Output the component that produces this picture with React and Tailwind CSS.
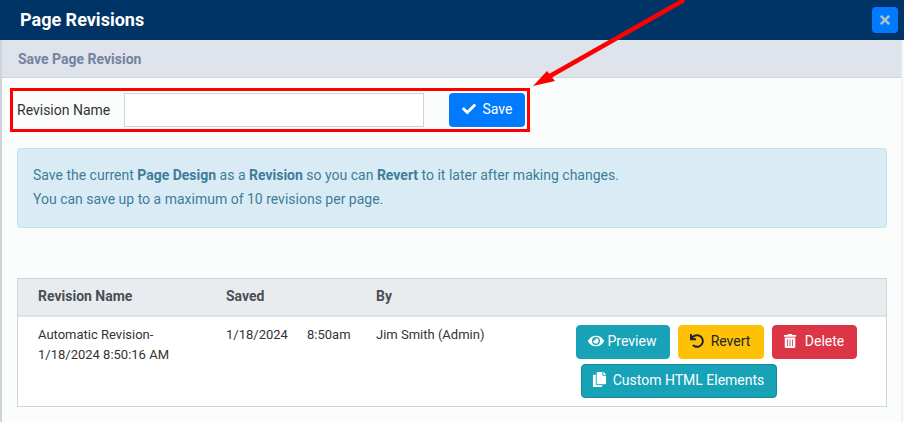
import React from 'react';
import { FaCheck, FaTimes, FaEye, FaUndo, FaTrashAlt, FaCopy } from 'react-icons/fa';

const ActionButton = ({ icon, label, className }) => (
  <button className={`flex h-[34px] items-center justify-center rounded border pr-[2px] pb-[3px] text-sm ${className}`}>
    {icon}
    <span>{label}</span>
  </button>
);

const App = () => {
  return (
    <div className="relative h-[422px] w-[904px] overflow-hidden bg-[#fbfdfd] font-['Roboto',sans-serif] text-[#333]">
      <header className="flex h-10 items-center justify-between bg-[#003366] pl-5 pr-[6px]">
        <h1 className="text-lg font-bold text-white">Page Revisions</h1>
        <button className="flex h-[26px] w-[26px] items-center justify-center rounded bg-[#007bff] text-[#b4bfcc]">
          <FaTimes className="h-[14px] w-[14px]" />
        </button>
      </header>

      <div className="mx-[2px]">
        <div className="flex h-[38px] items-center border-b border-[#ced4da] bg-[#dee3ec] pl-4 text-sm font-bold text-[#75829f]">
          Save Page Revision
        </div>

        <div className="mt-[10px] ml-2 flex h-11 w-[520px] items-center border-[3px] border-[#ff0000] pl-1">
          <label className="w-[107px] text-sm text-[#333]">Revision Name</label>
          <input className="h-[34px] w-[300px] border border-[#ced4da] bg-white outline-none" />
          <button className="ml-[25px] flex h-[34px] w-[76px] items-center justify-center gap-[7px] rounded bg-[#007bff] pb-[2px] text-sm text-white">
            <FaCheck className="h-[14px] w-[14px]" />
            Save
          </button>
        </div>

        <div className="mt-4 ml-[15px] flex h-20 w-[870px] flex-col justify-center gap-[4px] rounded border border-[#bee5eb] bg-[#d9ecf6] pb-[2px] pl-[15px] text-sm text-[#3f7c99]">
          <p>
            Save the current <b>Page Design</b> as a <b>Revision</b> so you can <b>Revert</b> to it later after making changes.
          </p>
          <p>You can save up to a maximum of 10 revisions per page.</p>
        </div>

        <div className="mt-[50px] ml-[15px] w-[870px] border border-[#ced4da] bg-white">
          <div className="flex h-[38px] items-center border-b-2 border-[#dee2e6] bg-[#e9ecef] pb-[2px] pl-5 text-sm font-bold text-[#4a4f55]">
            <span className="w-[188px]">Revision Name</span>
            <span className="w-[150px]">Saved</span>
            <span>By</span>
          </div>
          <div className="flex h-[89px] text-[13px] text-[#333]">
            <div className="w-[188px] pt-2 pl-5 leading-5 box-content">
              Automatic Revision-
              <br />
              1/18/2024 8:50:16 AM
            </div>
            <div className="flex w-[150px] pt-2 leading-5">
              <span className="w-[81px]">1/18/2024</span>
              <span>8:50am</span>
            </div>
            <div className="w-[200px] pt-2 leading-5">Jim Smith (Admin)</div>
            <div className="flex flex-col gap-[5px] pt-2">
              <div className="flex gap-2">
                <ActionButton
                  icon={<FaEye className="h-4 w-4" />}
                  label="Preview"
                  className="w-[94px] gap-[4px] border-[#17a2b8] bg-[#17a2b8] text-white"
                />
                <ActionButton
                  icon={<FaUndo className="h-[14px] w-[14px]" />}
                  label="Revert"
                  className="w-[86px] gap-[7px] border-[#ffc107] bg-[#ffc107] text-[#212529]"
                />
                <ActionButton
                  icon={<FaTrashAlt className="h-[14px] w-[14px]" />}
                  label="Delete"
                  className="w-[85px] gap-[8px] border-[#dc3545] bg-[#dc3545] text-white"
                />
              </div>
              <ActionButton
                icon={<FaCopy className="h-[15px] w-[15px]" />}
                label="Custom HTML Elements"
                className="ml-[5px] w-[196px] gap-[6px] border-[#138a9e] bg-[#17a2b8] text-white"
              />
            </div>
          </div>
        </div>
      </div>

      {/* side edges of the modal */}
      <div className="absolute top-10 bottom-0 left-0 w-[2px] bg-[#ced4da]" />
      <div className="absolute top-10 bottom-0 right-[1px] w-[2px] bg-[#eef0f3]" />

      {/* annotation arrow */}
      <svg className="absolute top-0 left-0" width="904" height="100" viewBox="0 0 904 100">
        <line x1="684" y1="0" x2="550" y2="76" stroke="#ff0000" strokeWidth="4.5" />
        <polygon points="533,86 547,71 555,81" fill="#ff0000" />
      </svg>
    </div>
  );
};

export default App;
